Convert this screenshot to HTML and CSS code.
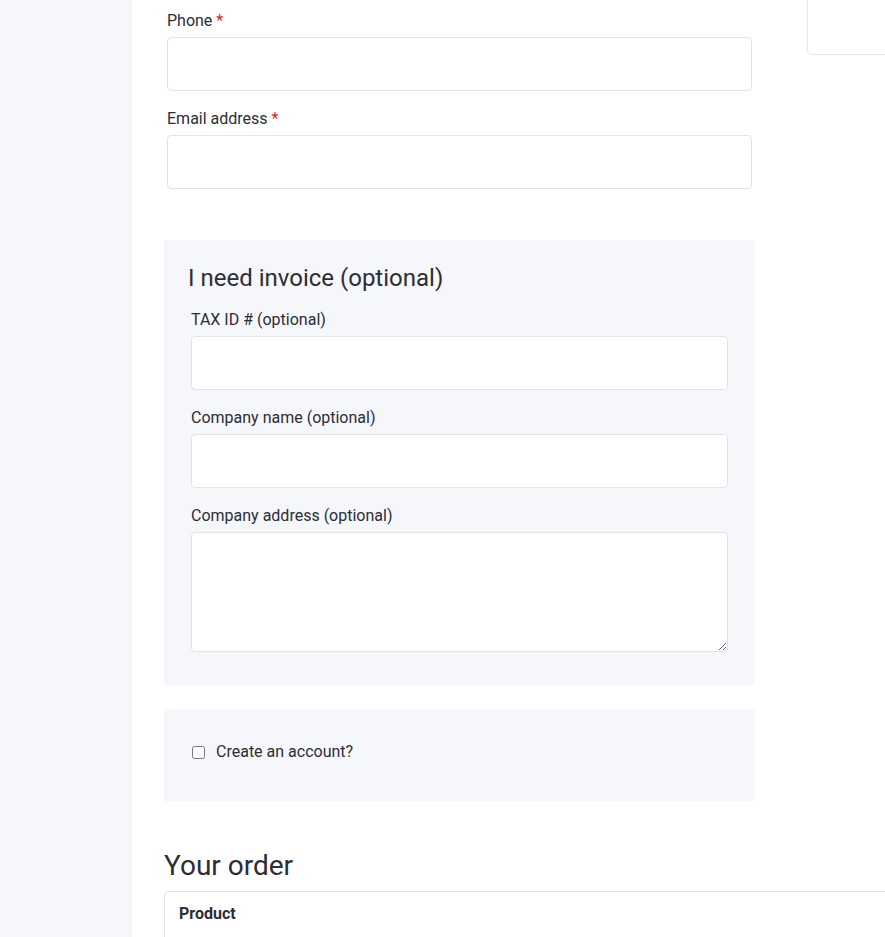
FILE: index.html
```html
<!DOCTYPE html>
<html lang="en">
<head>
<meta charset="utf-8">
<title>Checkout</title>
<link rel="stylesheet" href="styles.css">
</head>
<body>
<div class="page">
  <aside class="sidebar"></aside>
  <main class="main">
    <div class="columns">
      <div class="form-col">
        <div class="field">
          <label class="label">Phone <span class="req">*</span></label>
          <input class="input" type="text">
        </div>
        <div class="field">
          <label class="label">Email address <span class="req">*</span></label>
          <input class="input" type="text">
        </div>

        <section class="panel invoice">
          <h3 class="panel-title">I need invoice (optional)</h3>
          <div class="field">
            <label class="label">TAX ID # (optional)</label>
            <input class="input" type="text">
          </div>
          <div class="field">
            <label class="label">Company name (optional)</label>
            <input class="input" type="text">
          </div>
          <div class="field">
            <label class="label">Company address (optional)</label>
            <textarea class="input textarea"></textarea>
          </div>
        </section>

        <section class="panel account">
          <label class="check-row"><input type="checkbox" class="check"> <span>Create an account?</span></label>
        </section>
      </div>
      <div class="side-col">
        <div class="side-card"></div>
      </div>
    </div>

    <h3 class="order-title">Your order</h3>
    <div class="order-table">
      <div class="order-head">Product</div>
    </div>
  </main>
</div>
</body>
</html>
```

FILE: styles.css
```css
html, body {
  margin: 0;
  padding: 0;
  overflow: hidden;
  background: #ffffff;
}

body {
  font-family: Roboto, "Liberation Sans", Arial, sans-serif;
  color: #2d2d35;
  font-size: 16px;
}

.page {
  display: grid;
  grid-template-columns: 132px 1fr;
  min-height: 937px;
}

.sidebar {
  background: #f6f7fb;
}

.main {
  padding-left: 32px;
  min-width: 0;
}

.columns {
  display: flex;
  align-items: flex-start;
}

.form-col {
  width: 591px;
  flex: none;
}

.side-col {
  margin-left: 52px;
  width: 320px;
  flex: none;
}

.side-card {
  height: 54px;
  border: 1px solid #e6e6e6;
  border-top: none;
  border-radius: 0 0 0 5px;
  background: #fff;
}

.field {
  padding: 0 3px;
  margin-bottom: 17px;
}

.form-col > .field:first-child {
  padding-top: 10px;
}

.label {
  display: block;
  line-height: 22px;
  font-size: 16px;
  margin-bottom: 5px;
}

.req {
  color: #e01b1b;
}

.input {
  display: block;
  box-sizing: border-box;
  width: 100%;
  height: 54px;
  border: 1px solid #e3e3e3;
  border-radius: 4px;
  background: #fff;
  margin: 0;
  font: inherit;
}

.textarea {
  height: 120px;
}

.panel {
  background: #f6f7fb;
}

.invoice {
  margin-top: 51px;
  padding: 24px 24px 16px;
}

.panel-title {
  margin: 0 0 16px;
  font-size: 24px;
  font-weight: 400;
  line-height: 29px;
}

.account {
  margin-top: 24px;
  height: 92px;
  box-sizing: border-box;
  padding: 30px 27px 0;
}

.check-row {
  display: flex;
  align-items: center;
  line-height: 26px;
  font-size: 16px;
}

.check {
  width: 13px;
  height: 13px;
  margin: 0 11px 0 1px;
}

.order-title {
  margin: 48px 0 8px;
  font-size: 28px;
  font-weight: 400;
  line-height: 34px;
}

.order-table {
  border: 1px solid #e3e3e3;
  border-right: none;
  border-radius: 5px 0 0 0;
  height: 80px;
  margin-right: -40px;
}

.order-head {
  padding: 12px 14px 13px;
  font-weight: 700;
  font-size: 16px;
  line-height: 20px;
}
```
